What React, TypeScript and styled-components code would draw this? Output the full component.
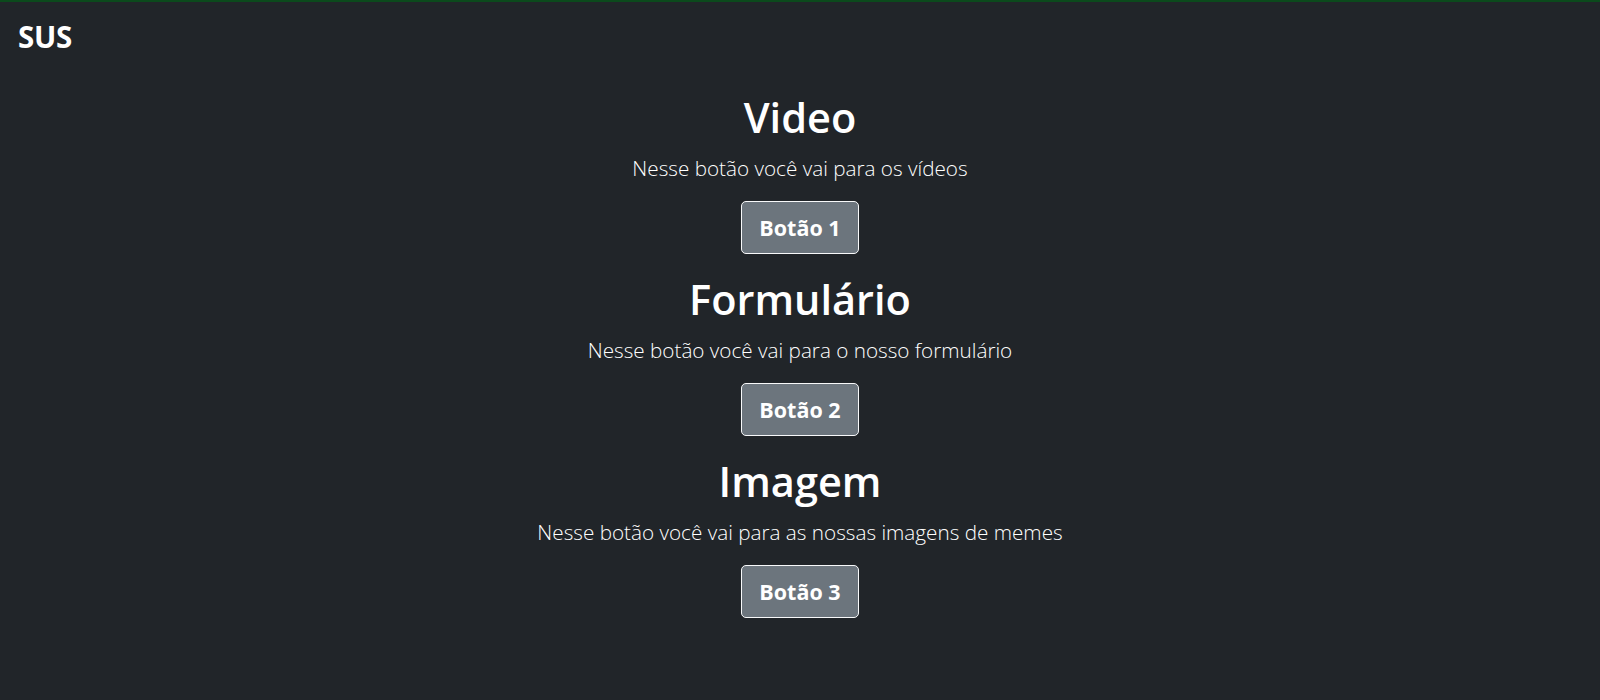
import React from "react";
import styled, { createGlobalStyle } from "styled-components";

const GlobalStyle = createGlobalStyle`
  html, body {
    margin: 0;
    padding: 0;
    background: #212529;
  }
  body {
    font-family: "Open Sans", "Noto Sans", "Liberation Sans", sans-serif;
    color: #ffffff;
    min-height: 700px;
  }
  * { box-sizing: border-box; }
`;

const Page = styled.div`
  min-height: 700px;
  background: #212529;
  border-top: 2px solid #0b4a1c;
`;

const Header = styled.header`
  display: flex;
  align-items: center;
  padding: 16px 18px 0;
`;

const Brand = styled.h3`
  margin: 0;
  font-size: 29.5px;
  font-weight: 700;
  line-height: 37px;
  letter-spacing: -0.3px;
`;

const Main = styled.main`
  display: flex;
  flex-direction: column;
  align-items: center;
  padding-top: 36px;
`;

const Section = styled.section`
  display: flex;
  flex-direction: column;
  align-items: center;
  text-align: center;
  padding-bottom: 19px;
`;

const Title = styled.h1`
  margin: 0 0 8px;
  font-size: 41.5px;
  font-weight: 600;
  line-height: 53px;
`;

const Lead = styled.p`
  margin: 0 0 16px;
  font-size: 20.7px;
  font-weight: 300;
  line-height: 33px;
`;

const Button = styled.button`
  height: 53px;
  width: 118px;
  padding: 0;
  border: 1px solid #f8f9fa;
  border-radius: 5px;
  background: #6c757d;
  color: #ffffff;
  font-family: inherit;
  font-size: 21.5px;
  font-weight: 700;
  cursor: pointer;
`;

const sections = [
  { title: "Video", lead: "Nesse botão você vai para os vídeos", button: "Botão 1" },
  { title: "Formulário", lead: "Nesse botão você vai para o nosso formulário", button: "Botão 2" },
  { title: "Imagem", lead: "Nesse botão você vai para as nossas imagens de memes", button: "Botão 3" },
];

export default function App() {
  return (
    <>
      <GlobalStyle />
      <Page>
        <Header>
          <Brand>SUS</Brand>
        </Header>
        <Main>
          {sections.map((s) => (
            <Section key={s.title}>
              <Title>{s.title}</Title>
              <Lead>{s.lead}</Lead>
              <Button>{s.button}</Button>
            </Section>
          ))}
        </Main>
      </Page>
    </>
  );
}
